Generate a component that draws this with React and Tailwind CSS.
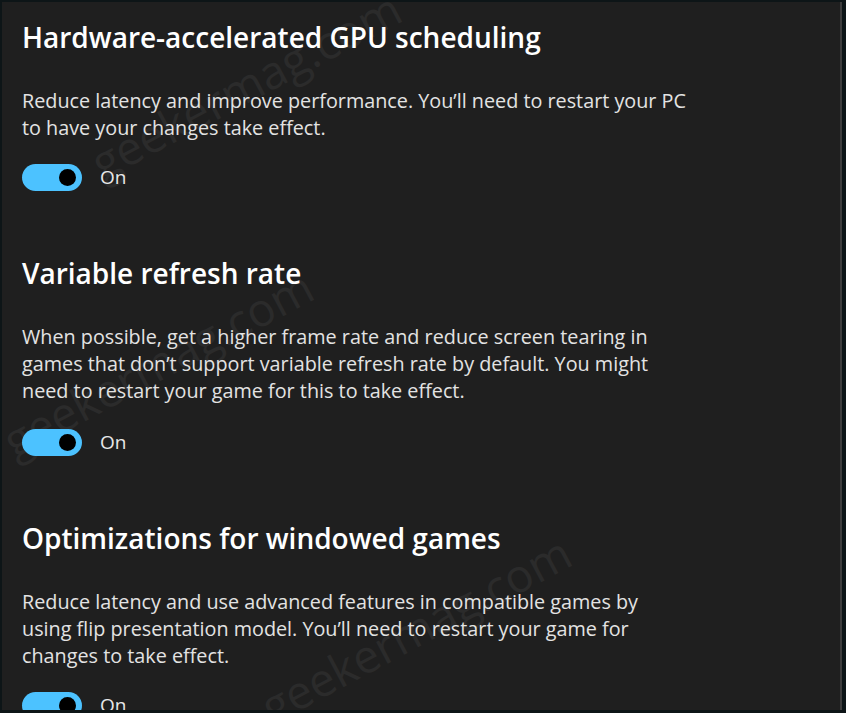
const sections = [
  {
    title: 'Hardware-accelerated GPU scheduling',
    lines: [
      'Reduce latency and improve performance. You\u2019ll need to restart your PC',
      'to have your changes take effect.',
    ],
  },
  {
    title: 'Variable refresh rate',
    lines: [
      'When possible, get a higher frame rate and reduce screen tearing in',
      'games that don\u2019t support variable refresh rate by default. You might',
      'need to restart your game for this to take effect.',
    ],
  },
  {
    title: 'Optimizations for windowed games',
    lines: [
      'Reduce latency and use advanced features in compatible games by',
      'using flip presentation model. You\u2019ll need to restart your game for',
      'changes to take effect.',
    ],
  },
]

function Toggle() {
  return (
    <div className="flex items-center gap-[18px] h-[28px]">
      <div className="w-[60px] h-[27px] rounded-full bg-[#4cc2ff] flex items-center justify-end pr-[6px]">
        <div className="w-[17px] h-[17px] rounded-full bg-black" />
      </div>
      <span className="text-[19px] text-[#e8e8e8]">On</span>
    </div>
  )
}

// faint site watermark baked into the screenshot
const Watermark = ({ className }) => (
  <div className={`absolute pointer-events-none select-none text-[46px] leading-none text-[#2b2b2b] -rotate-[28deg] origin-left ${className}`}>
    geekermag.com
  </div>
)

export default function App() {
  return (
    <div className="w-[846px] h-[713px] bg-[#0d1517] pt-[2px] pb-[3px] pl-[2px] overflow-hidden" style={{ fontFamily: '"Open Sans", "Noto Sans", sans-serif' }}>
      <div className="h-full flex">
        <div className="relative flex-1 bg-[#1f1f1f] overflow-hidden">
          <Watermark className="left-[92px] top-[140px]" />
          <Watermark className="left-[4px] top-[418px]" />
          <Watermark className="left-[262px] top-[684px]" />
          <div className="relative z-10 pl-[20px] pt-[17px]">
            {sections.map((s, i) => (
              <div key={i} className={i > 0 ? 'mt-[64px]' : ''}>
                <h2 className="text-[28px] leading-[36px] font-semibold text-white whitespace-nowrap">{s.title}</h2>
                <p className="mt-[32px] text-[19.8px] leading-[27px] text-[#e3e3e3] whitespace-nowrap">
                  {s.lines.map((l, j) => (
                    <span key={j} className="block">{l}</span>
                  ))}
                </p>
                <div className={i === 1 ? 'mt-[24px]' : 'mt-[22px]'}>
                  <Toggle />
                </div>
              </div>
            ))}
          </div>
        </div>
        <div className="w-[2px] bg-[#1f1f1f]" />
        <div className="w-[2px] bg-[#3d3d3d]" />
        <div className="w-[4px] bg-[#0d1517]" />
      </div>
    </div>
  )
}
